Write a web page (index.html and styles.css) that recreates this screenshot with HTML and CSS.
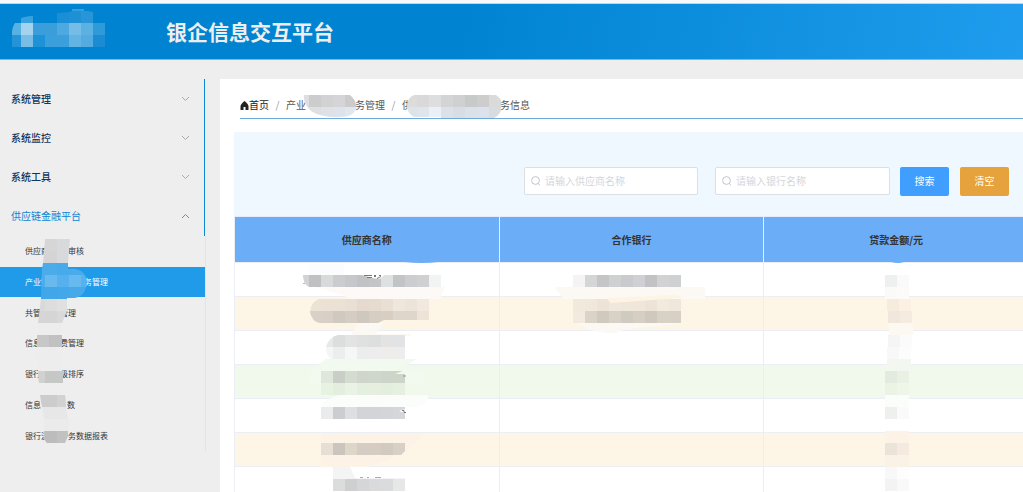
FILE: index.html
```html
<!DOCTYPE html>
<html lang="zh-CN">
<head>
<meta charset="utf-8">
<title>银企信息交互平台</title>
<link rel="stylesheet" href="styles.css">
</head>
<body>
<header class="topbar">
  <svg class="logo" width="96" height="40" viewBox="10 9 96 40" aria-hidden="true">
    <clipPath id="c-logo"><path d="M12 47V31Q14 16 33 16V22H45Q45 14 58 13L70 12Q74 9 83 10L93 12V23H105V47Z"/></clipPath>
    <g clip-path="url(#c-logo)" data-tiles="9,11,- #37a2de - - #1b8fd5 #1e90d6 #2795d8 #1b90d8;9,23,#57b1e2 #a3d3ef #3a9edb #3a9edb #4da9df #75bce7 #5bb1e2 #2f9ada;9,35,#2394d8 #77bde6 #1e92d7 #3a9fdb #3a9fdb #62b4e3 #54abe0 #1b8cd4"/>
    <path d="M72 10h12" stroke="#72b9e2"/>
  </svg>
  <h1 class="title">银企信息交互平台</h1>
</header>
<div class="layout">
  <aside class="sidebar">
    <nav class="menu">
      <button class="menu-item" type="button">系统管理<svg class="chevron" viewBox="0 0 9 6"><path d="M1 1l3.500 3.500L8 1"/></svg></button>
      <button class="menu-item" type="button">系统监控<svg class="chevron" viewBox="0 0 9 6"><path d="M1 1l3.500 3.500L8 1"/></svg></button>
      <button class="menu-item" type="button">系统工具<svg class="chevron" viewBox="0 0 9 6"><path d="M1 1l3.500 3.500L8 1"/></svg></button>
      <button class="menu-item open" type="button">供应链金融平台<svg class="chevron" viewBox="0 0 9 6"><path d="M1 5l3.500-3.500L8 5"/></svg></button>
    </nav>
    <div class="submenu">
      <a class="sub" href="#"><span>供应商</span><i class="gap-m"></i><span>审核</span></a>
      <a class="sub active" href="#"><span>产业链</span><i class="gap-l"></i><span>务管理</span></a>
      <a class="sub" href="#"><span>共管</span><i class="gap-m"></i><span>管理</span></a>
      <a class="sub" href="#"><span>信息</span><i class="gap-m"></i><span>费管理</span></a>
      <a class="sub" href="#"><span>银行</span><i class="gap-m"></i><span>级排序</span></a>
      <a class="sub" href="#"><span>信息</span><i class="gap-l"></i><span>数</span></a>
      <a class="sub" href="#"><span>银行流</span><i class="gap-m"></i><span>务数据报表</span></a>
      <svg class="mask" width="205" height="215" viewBox="0 236 205 215" aria-hidden="true">
        <clipPath id="c-side"><path d="M45 239H70L68 263V269Q84 267 87 281Q86 297 74 298H67V311L62 323H38L41 299L42 269L43 263Z"/></clipPath>
        <path d="M38 323h24v12h-24zM37 347h25v24h-24z" fill="#ededed"/>
        <g clip-path="url(#c-side)" data-tiles="33,239,#dadada #d6d6d6 #d8d9db #dadada;33,251,#d6d6d6 #d4d4d4 #d8d9da #dadada;33,263,#4bace9 #4bace9 #47aaea #4babe9 #4bace9;33,275,#4dadea #68b9ee #56b0ed #66baf0 #56b2ee;33,287,#42a7e9 #42a7e9 #43a8e9 #47a9e9 #47a9e9;33,299,#d9d9d9 #dddddd #e0e0e0 #e0e0e0;33,311,#d6d6d6 #d5d5d5 #d9d9d9 #d9d9d9"/>
        <g data-tiles="37,335,#c7c7c7 #bfbfbf;50,335,#c1c1c1"/>
        <path d="M38 371h25v12h-24z" fill="#c6c7c7"/><path d="M38 371h7v12h-6z" fill="#d1d1cf"/>
        <path d="M40 395h25l1 12H42z" fill="#cccccd"/><path d="M57 395h8l1 12h-9z" fill="#d2d2d3"/>
        <path d="M42 407h24l2 12H44z" fill="#e7e7e7"/>
        <path d="M45 419h24v12H43z" fill="#ebebeb"/>
        <path d="M44 431h24v5l-3 7H47l-3-4z" fill="#c1c1c2"/><path d="M45 431h12v12H47l-2-3z" fill="#bcbcbc"/>
      </svg>
    </div>
  </aside>
  <main class="content">
    <nav class="crumbs" aria-label="breadcrumb">
      <svg class="home" width="9" height="9" viewBox="0 0 9 9"><path d="M4.500 0C3 1 1 3 .5 5v4h3V6h2v3h3V5C8 3 6 1 4.500 0z"/></svg>
      <a href="#">首页</a>
      <span class="slash">/</span>
      <a class="crumb" href="#">产业<i class="gap-crumb"></i>务管理
        <svg class="mask-crumb" width="53" height="24" viewBox="303 94 53 24" aria-hidden="true">
          <clipPath id="c-a"><path d="M304 95H350Q357 101 356 108Q354 117 340 117Q322 118 311 111Q303 104 304 95Z"/></clipPath>
          <g clip-path="url(#c-a)" data-tiles="297,95,#dedee0 #ccccce #d2d2d4 #d5d5d7 #cbcbcc;297,107,#e3e4e6 #dedfe2 #dfe1e6 #dee3eb #e2e6ed"/>
        </svg></a>
      <span class="slash">/</span>
      <span class="crumb">供<i class="gap-crumb-wide"></i>务信息
        <svg class="mask-crumb second" width="95" height="24" viewBox="407 94 95 24" aria-hidden="true">
          <clipPath id="c-b"><path d="M414 95H496Q502 99 502 105Q502 114 494 118H441V117H414Q407 113 407 106Q407 98 414 95Z"/></clipPath>
          <g clip-path="url(#c-b)" data-tiles="405,95,#dcdcdd #d9d9da #dddee0 #d3d4d5 #cfd0d1 #c7cac9 #cdcdce #dadada;405,107,#dce3e9 #dfe5ea #eaf0f5 #dce1e8 #d9dde3 #dbe1e9 #dbe2ed #d9dcdf"/>
        </svg></span>
    </nav>
    <form class="search">
      <label class="field"><svg class="glass" width="10" height="10" viewBox="0 0 10 10"><circle cx="4.500" cy="4.500" r="3.900"/><path d="M7.200 7.500L9 9.300"/></svg><input type="text" aria-label="供应商名称" placeholder="请输入供应商名称"></label>
      <label class="field"><svg class="glass" width="10" height="10" viewBox="0 0 10 10"><circle cx="4.500" cy="4.500" r="3.900"/><path d="M7.200 7.500L9 9.300"/></svg><input type="text" aria-label="银行名称" placeholder="请输入银行名称"></label>
      <button class="btn primary" type="button">搜索</button>
      <button class="btn warn" type="button">清空</button>
    </form>
    <div class="table-wrap">
      <table class="grid">
        <thead><tr><th>供应商名称</th><th>合作银行</th><th>贷款金额/元</th></tr></thead>
        <tbody>
          <tr><td></td><td></td><td></td></tr>
          <tr class="warm"><td></td><td></td><td></td></tr>
          <tr><td></td><td></td><td></td></tr>
          <tr class="green"><td></td><td></td><td></td></tr>
          <tr><td></td><td></td><td></td></tr>
          <tr class="warm"><td></td><td></td><td></td></tr>
          <tr><td></td><td></td><td></td></tr>
        </tbody>
      </table>
      <svg class="mask" width="789" height="276" viewBox="234 216 789 276" aria-hidden="true">
        <path d="M405 262h33q-16 2-33 0zM891 262h13q-6 2-13 0z" fill="#6badf6"/>
        <path d="M309 264h35v11h-35z" fill="#fcfcfc"/>
        <path d="M315 287H445L440 299H349Q344 294 315 287Z" fill="#fcf9f7"/>
        <clipPath id="c-1"><path d="M303 275H441V287H309Q303 284 303 275Z"/></clipPath>
        <g clip-path="url(#c-1)" data-tiles="297,275,#d2d2d4 #c0c0c2 #d8d9db #cbccce #c6c7ca #c1c2c4 #c4c5c7 #dee1e1 #c2c4c5 #cccdd0 #cfd0d2 #f2f4f4"/>
        <path d="M362 275h22l-4 4-8-1z" fill="#fff"/>
        <path d="M364 275.500h8m2 0h2m3 0h2M367 277.500h5m2-1h2m1 2 4-2M304 283v1" stroke="#777" fill="none"/>
        <clipPath id="c-2"><path d="M319 299H429V320H384L378 323H320Q312 322 310 312Q311 302 319 299Z"/></clipPath>
        <g clip-path="url(#c-2)" data-tiles="309,299,#ece2d5 #ebe1d5 #ebe2d5 #e9dfd4 #e5dacd #e5dccf #e9dfd2 #efe7dc #ece4d9 #f2e9de;309,311,#d9d1c8 #d8d0c6 #cfc9c0 #d5cdc3 #cec8be #d6cec3 #d8cec2 #ded6ca #ddd6ca #ede4d7"/>
        <path d="M357 323h27l-8 11h35v2h-60z" fill="#fcf8f3"/>
        <clipPath id="c-3"><path d="M338 335H405V359H331Q326 355 326 347Q329 337 338 335Z"/></clipPath>
        <g clip-path="url(#c-3)" data-tiles="321,335,#e7e8e8 #dcdedd #e3e3e3 #dfe0e0 #dddede #e3e3e3 #e2e3e4;321,347,#f4f5f5 #eceeee #f5f6f6 #ebecec #eeecec #eeedec #ededee"/>
        <path d="M326 359H417L396 371H425V383H405V395H321V383H310V371Z" fill="#f2f9ef"/>
        <g data-tiles="321,371,#dfe6dc #c9cfc7 #d4dcd1 #cfd5cb #cfd6cb #cdd4c9 #cdd5c9;321,383,#e8f2e3 #e4eedf #e9f2e4 #e5efdf #e5eedf #e4eedf #e6f0e0"/>
        <path d="M395 374l10-4v4z" fill="#f2f8ef"/><path d="M403 376h3" stroke="#999"/>
        <path d="M340 395H429Q427 405 417 407H321Q325 398 340 395Z" fill="#fafdfa"/>
        <g data-tiles="321,407,#ebebeb #cccdd0 #dedfe1 #d3d4d8 #d3d4d8 #d3d5d9 #d5d6d9"/>
        <path d="M399 411l6-2v4z" fill="#fff"/><path d="M402 410.500h2v2h2" stroke="#777" fill="none"/>
        <path d="M370 433H423Q421 440 399 455L369 467H321V433Z" fill="#fcf3e6"/>
        <clipPath id="c-4"><path d="M321 443H405V451L401 455H321Z"/></clipPath>
        <g clip-path="url(#c-4)" data-tiles="321,443,#e8dfd4 #cac6be #ddd7ca #d5ccc3 #d5ccc2 #d1cabf #d8d0c6"/>
        <path d="M333 467h17l5 11h50v1h-72z" fill="#f4f4f4"/>
        <path d="M360 477.500h3m4 0h2m6 0h6" stroke="#aaa"/>
        <g data-tiles="333,479,#dadddc #cecfcf #d5d6d7 #d8dadc #dadbdd #e7e7e7"/>
        <path d="M554 287H705V299H564ZM576 323H690L625 329Q610 337 592 330Z" fill="#fcf9f5"/>
        <g data-tiles="573,275,#f4f4f4 #d4d5d7 #c5c5c8 #ced0d2 #c9cacd #cfd0d3 #c2c2c5 #d2d2d4 #cfd0d2;573,299,#f1e9db #f1e8dc #ede4d7 #f0e8dc #efe7da #f0e7da #ece4d7 #f2eadd #efe7db;573,311,#f2eade #dad3c8 #cfc9be #d8d1c6 #d0cbc0 #d4cec3 #cec8be #d8d1c6 #d7d1c5"/>
        <path d="M606 298l67-3 8 1v2l-70 5z" fill="#fdf4e4"/>
        <g data-tiles="885,275,#eef0ef #fafafa;885,287,#fcfaf9 #fcfbfa;887,299,#f5ecde #fbf0e2;888,311,#f1e7dc #f5ebdf;889,323,#fcf8f2 #fcf8f2;888,335,#f5f5f5 #fbfbfb;887,347,#f8f8f8 #fcfcfc;887,359,#f2f8f0 #f2f8f0;885,371,#e3eae0 #e9f1e4;885,383,#eaf3e4 #eef6e8;885,395,#fafdfa #fafdfa;885,407,#eef0ef #fafafa;885,431,#fcf2e6 #fcf2e5;885,443,#ebe3d7 #f5eadf;885,455,#faf2e6 #faf2e6;885,467,#f8f8f9 #fdfdfd;885,479,#f3f3f3 #f9f9f9"/>
      </svg>
    </div>
  </main>
</div>
<script src="tiles.js"></script>
</body>
</html>
```
FILE: styles.css
```css
* { box-sizing: border-box; }
body {
  margin: 0;
  min-height: 100vh;
  padding-top: 3px;
  display: flex;
  flex-direction: column;
  overflow: hidden;
  background: #eee;
  color: #333;
  font: 10px/16px "Noto Sans CJK SC", sans-serif;
}
a { color: inherit; text-decoration: none; }
button, input { font: inherit; }
i { display: inline-block; }

.topbar {
  height: 57px;
  display: flex;
  align-items: center;
  gap: 60px;
  padding: 0 0 2px 10px;
  border-top: 1px solid #c3d3df;
  border-bottom: 1px solid #79b9e0;
  background: linear-gradient(100deg, #0084d1 45%, #1f9ced);
  box-shadow: 0 -3px #f7f9fa;
}
.logo { margin-bottom: 3px; }
.title { margin: 0; font-size: 21px; line-height: 32px; color: #eee; }

.layout { flex: 1; display: flex; padding-top: 19px; }
.sidebar { flex: none; width: 206px; margin-right: 14px; }
.menu { width: 205px; border-right: 1px solid #0b8ad4; }
.menu-item {
  width: 100%;
  height: 39px;
  padding: 0 14px 0 11px;
  display: flex;
  align-items: center;
  justify-content: space-between;
  border: 0;
  background: none;
  color: #10355f;
  font-weight: 500;
}
.menu-item.open { height: 40px; color: #0b84d1; font-weight: 400; }
.chevron { width: 9px; height: 6px; fill: none; stroke: #aaa; }
.open .chevron { stroke: #3a9cdb; }

.submenu {
  position: relative;
  height: 215px;
  display: grid;
  grid-template-rows: repeat(7, 1fr);
  border-right: 1px solid #e4e4e4;
}
.sub { display: flex; align-items: center; padding-left: 25px; font-size: 8px; line-height: 12px; }
.sub.active { background: #1f9bea; color: #fff; }
.gap-m { width: 19px; }
.gap-l { width: 35px; }
.sub:nth-child(6) .gap-l { width: 26px; }
.mask { position: absolute; top: 0; left: 0; pointer-events: none; }

.content { flex: 1; min-width: 0; padding: 13px 0 0 14px; background: #fff; overflow: hidden; }
.crumbs {
  height: 27px;
  margin: 0 0 13px 6px;
  display: flex;
  align-items: center;
  border-bottom: 1px solid #6aaade;
  white-space: nowrap;
}
.crumbs a:first-of-type { color: #222; }
.home { fill: #222; }
.slash { width: 17px; text-align: center; color: #999; }
.crumbs .crumb { position: relative; color: #555; }
.gap-crumb { width: 49px; }
.gap-crumb-wide { width: 88px; }
.mask-crumb { position: absolute; left: 17px; top: -3px; }
.mask-crumb.second { left: 5px; }

.search {
  height: 84px;
  padding: 14px 14px 0 0;
  display: flex;
  align-items: center;
  justify-content: flex-end;
  background: #eff7ff;
}
.field {
  width: 174px;
  height: 28px;
  margin-right: 17px;
  padding-left: 6px;
  display: flex;
  align-items: center;
  gap: 4px;
  border: 1px solid #dcdfe6;
  border-radius: 2px;
  background: #fff;
}
.field + .field { width: 175px; margin-right: 10px; }
.field input { flex: 1; min-width: 0; padding: 0; border: 0; outline: 0; background: none; }
.field input::placeholder { color: #d3d6dc; opacity: 1; }
.glass { fill: none; stroke: #c0c4cc; }
.btn { width: 49px; height: 29px; padding: 0; border: 0; border-radius: 2px; color: #fff; }
.primary { margin-right: 11px; background: #409eff; }
.warn { background: #e6a23c; }

.table-wrap { position: relative; }
.grid {
  width: 100%;
  min-width: 795px;
  table-layout: fixed;
  border-collapse: separate;
  border-spacing: 0;
  border-top: 1px solid #e6edf8;
  border-left: 1px solid #ebeef5;
}
.grid th {
  height: 46px;
  padding: 0;
  border-right: 1px solid #ebeef5;
  border-bottom: 1px solid #ebeef5;
  background: #6badf6;
  color: #333;
}
.grid td { height: 34px; padding: 0; border-right: 1px solid #ebeef5; border-bottom: 1px solid #ebeef5; }
.warm { background: #fdf5e6; }
.green { background: #f0f9eb; }
```
FILE: tiles.js
```js
const NS = 'http://www.w3.org/2000/svg';
const SIZE = 12;

document.querySelectorAll('[data-tiles]').forEach((group) => {
  group.dataset.tiles.split(';').forEach((row) => {
    const [x, y, colors] = row.split(',');
    colors.split(' ').forEach((color, i) => {
      if (color === '-') return;
      const rect = document.createElementNS(NS, 'rect');
      rect.setAttribute('x', Number(x) + i * SIZE);
      rect.setAttribute('y', y);
      rect.setAttribute('width', SIZE);
      rect.setAttribute('height', SIZE);
      rect.setAttribute('fill', color);
      group.appendChild(rect);
    });
  });
});
```
